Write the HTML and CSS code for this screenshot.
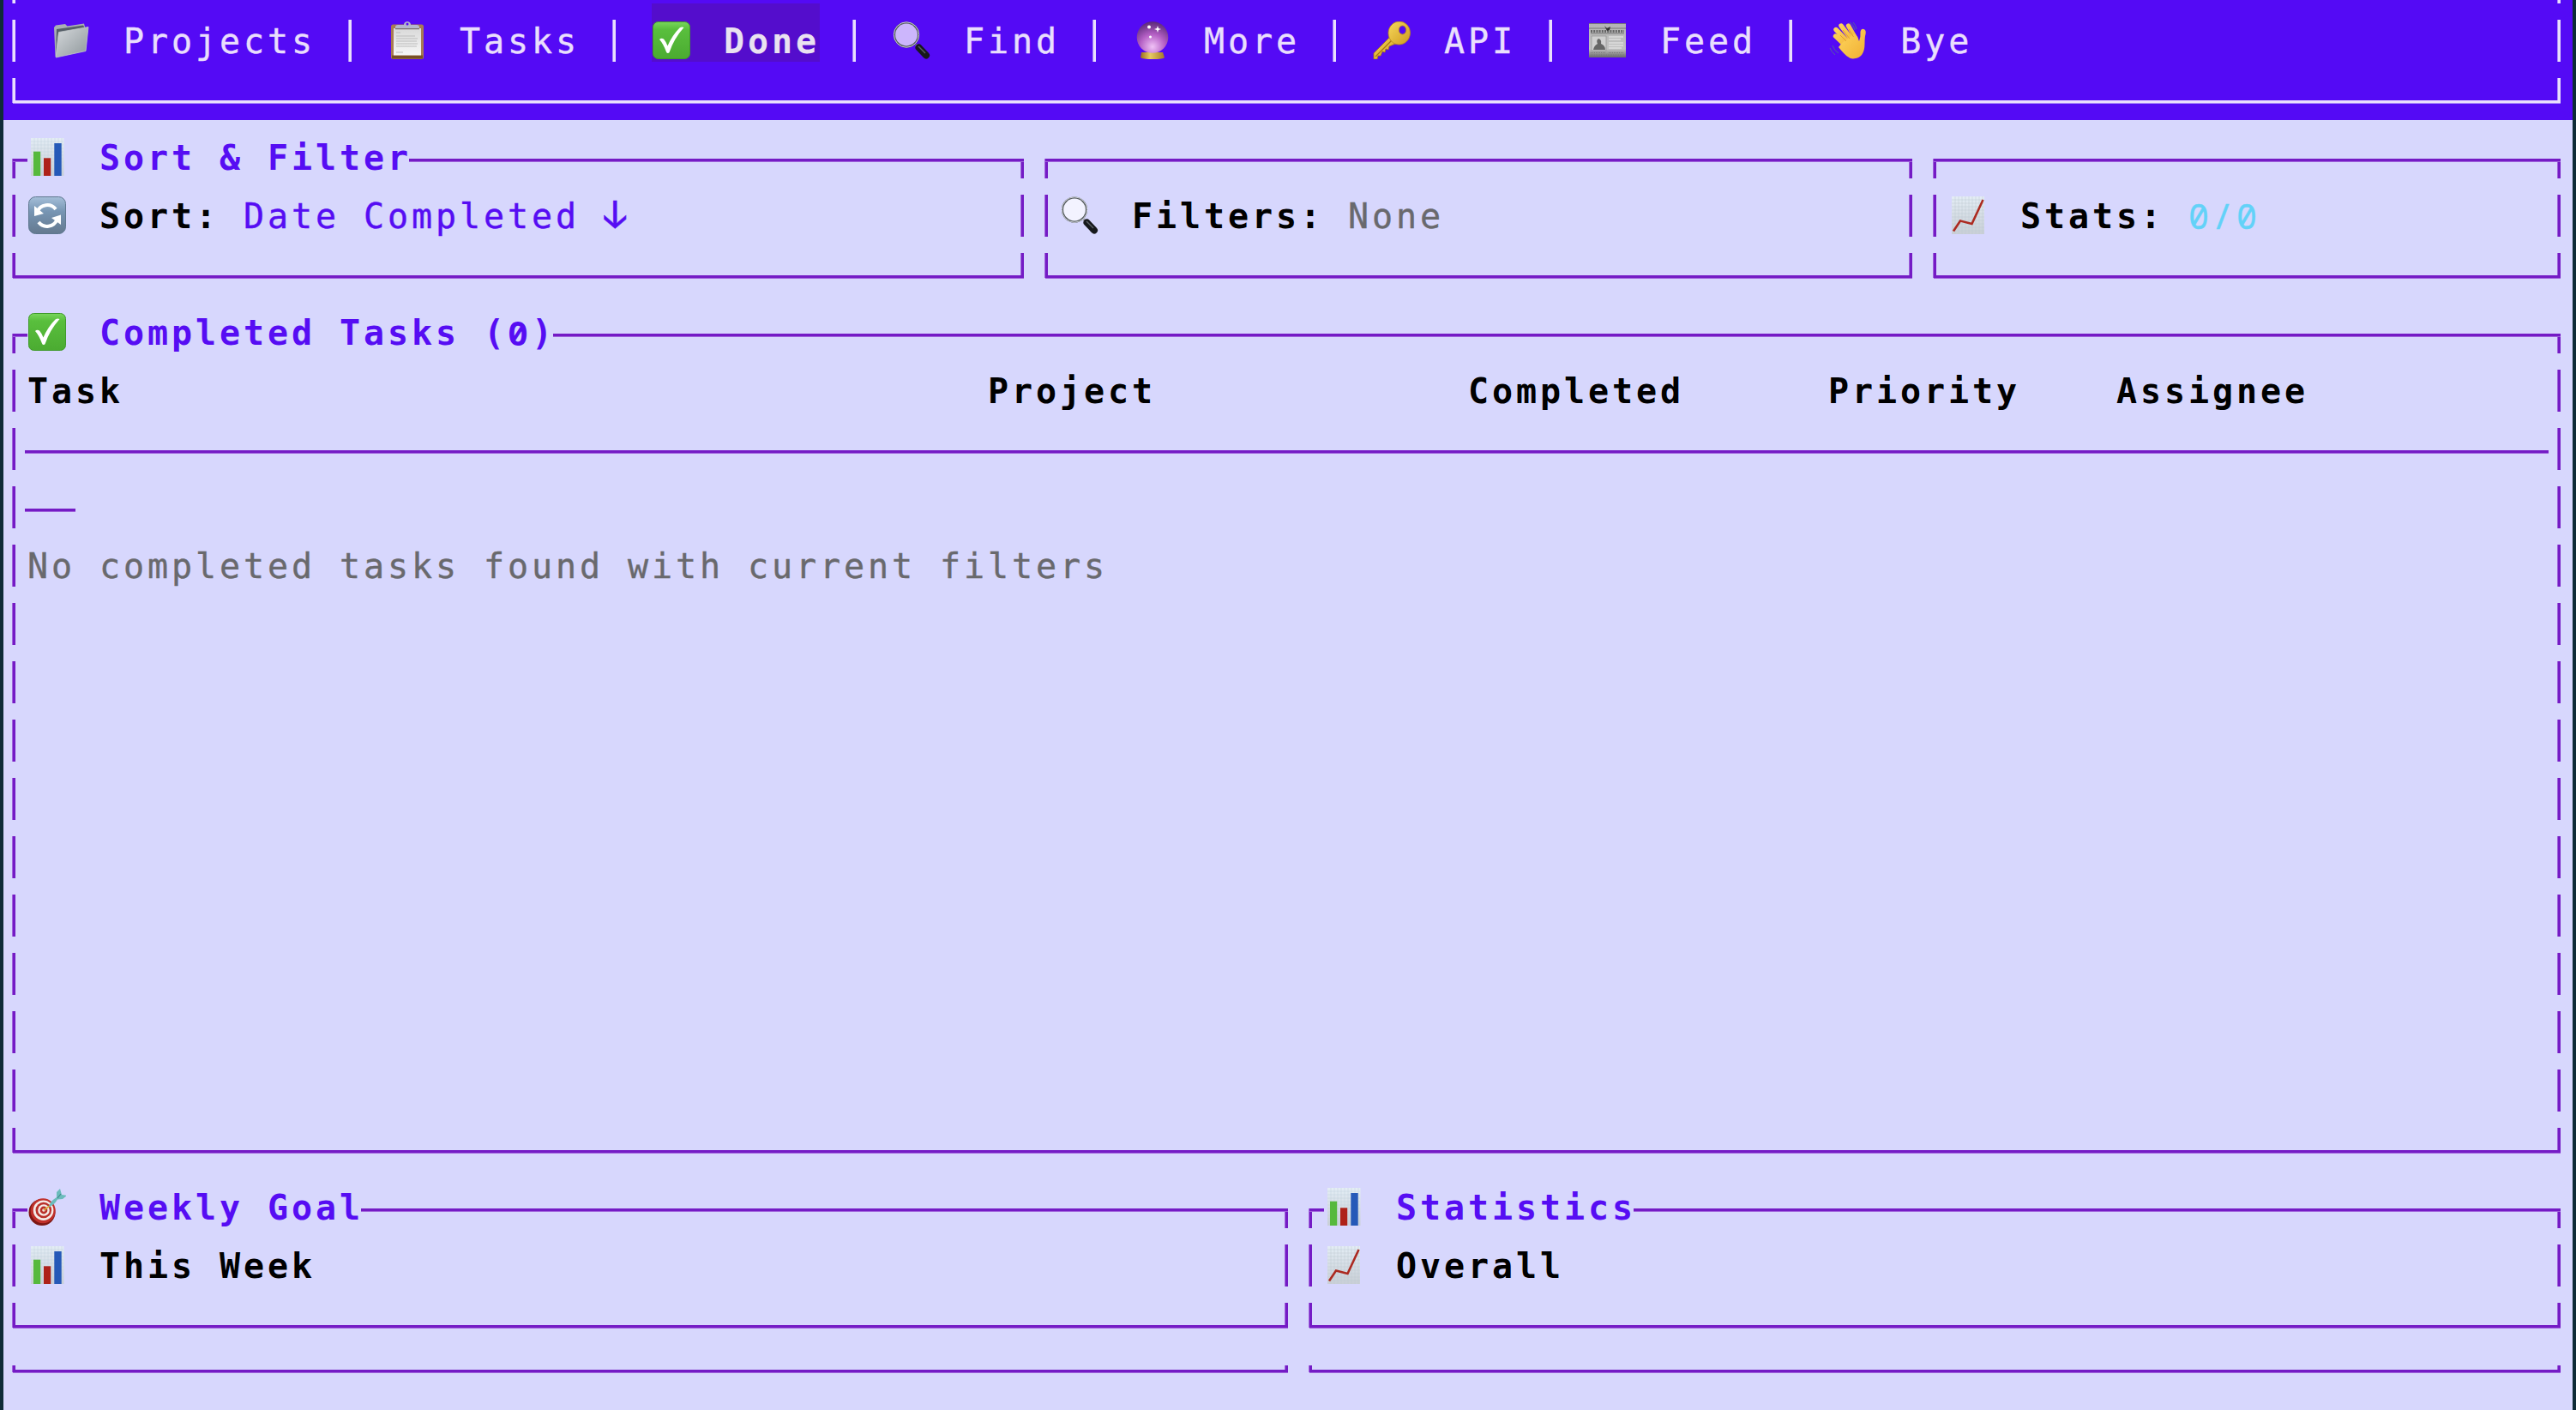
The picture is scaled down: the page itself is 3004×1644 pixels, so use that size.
FILE: index.html
```html
<!DOCTYPE html>
<html lang="en">
<head>
<meta charset="utf-8">
<title>Completed Tasks</title>
<link rel="stylesheet" href="styles.css">
</head>
<body>
<svg class="defs" aria-hidden="true">
  <defs>
    <linearGradient id="gSilver" x1="0" y1="0" x2="1" y2="1"><stop offset="0" stop-color="#d5d9dc"/><stop offset="1" stop-color="#8f979b"/></linearGradient>
    <linearGradient id="gPaper" x1="0" y1="0" x2="0" y2="1"><stop offset="0" stop-color="#e4edf5"/><stop offset="1" stop-color="#c9cfd6"/></linearGradient>
    <linearGradient id="gGreen" x1="0" y1="0" x2="0" y2="1"><stop offset="0" stop-color="#79d65c"/><stop offset=".2" stop-color="#59bf3d"/><stop offset="1" stop-color="#4bab31"/></linearGradient>
    <linearGradient id="gSlate" x1="0" y1="0" x2="0" y2="1"><stop offset="0" stop-color="#a5bfd9"/><stop offset=".4" stop-color="#7795b3"/><stop offset="1" stop-color="#64798f"/></linearGradient>
    <radialGradient id="gBall" cx=".5" cy=".8" r=".8"><stop offset="0" stop-color="#f0c2f6"/><stop offset=".5" stop-color="#b45fc4"/><stop offset="1" stop-color="#5a2a78"/></radialGradient>
    <linearGradient id="gGold" x1="0" y1="0" x2="1" y2="0"><stop offset="0" stop-color="#9c6d1c"/><stop offset=".4" stop-color="#e8cb62"/><stop offset="1" stop-color="#a57a26"/></linearGradient>
    <linearGradient id="gKey" x1="0" y1="0" x2="1" y2="1"><stop offset="0" stop-color="#f7d95c"/><stop offset="1" stop-color="#cf9a1e"/></linearGradient>
    <linearGradient id="gNews" x1="0" y1="0" x2="0" y2="1"><stop offset="0" stop-color="#b4b4b4"/><stop offset=".75" stop-color="#c2c2c2"/><stop offset="1" stop-color="#6a6a6a"/></linearGradient>
    <linearGradient id="gHand" x1="0" y1="0" x2="1" y2="1"><stop offset="0" stop-color="#ffd75e"/><stop offset="1" stop-color="#f0ae33"/></linearGradient>
    <linearGradient id="gSheet" x1="0" y1="0" x2="0" y2="1"><stop offset="0" stop-color="#d9d9d9"/><stop offset="1" stop-color="#f7f7f7"/></linearGradient>
  </defs>
  <symbol id="folder" viewBox="0 0 44 44">
    <path d="M2 7 4 4.500 15 3 17.500 5.500 37 2.500 38.500 8 8 40 3.500 41z" fill="#aab0b4"/>
    <path d="M5 9 36 4.500 38 8 7 14 4 38z" fill="#565f68"/>
    <path d="M7.500 12.500 42 6.500 39 34.500 4.200 42z" fill="url(#gSilver)" stroke="#c4c9cc" stroke-width=".8"/>
  </symbol>
  <symbol id="clipboard" viewBox="0 0 44 44">
    <rect x="3" y="3.500" width="38" height="40.500" rx="2.500" fill="#a87b52"/>
    <rect x="4" y="39.500" width="36" height="4" fill="#775025"/>
    <rect x="6" y="8" width="32" height="31.500" fill="url(#gSheet)"/>
    <path d="M9 13h5M9 17h22M9 20h25M9 23h24M9 26h25M9 29h24M9 36h8" stroke="#bcbcbc" stroke-width="1.200"/>
    <path d="M8 8.500V6.500Q8 4 11 4h7q0-3.500 4-4 4 .5 4 4h7q3 0 3 2.500v2z" fill="#b5b8cc"/>
    <path d="M8 8.700h28" stroke="#6c5a58" stroke-width="1"/>
    <circle cx="22" cy="3" r="1.500" fill="#540af5"/>
  </symbol>
  <symbol id="check" viewBox="0 0 44 44">
    <rect x=".5" y=".5" width="43" height="43" rx="6" fill="url(#gGreen)" stroke="#409a2c"/>
    <path d="M8 21q2-2 5-.5 3 3.500 4.500 8Q23 16 31.500 7.500q2.500-1.500 5-.5Q25 20 20 35q-.5 2-2 2-1.500 0-2-1.500Q12.500 26 8 21z" fill="#fff"/>
  </symbol>
  <symbol id="search" viewBox="0 0 44 44">
    <path d="m27 27 4 4" stroke="#777" stroke-width="3"/>
    <path d="m30.500 30.500 8.500 9" stroke="#17191c" stroke-width="8" stroke-linecap="round"/>
    <path d="m30 29 8 8" stroke="#5b6065" stroke-width="1.500"/>
    <circle cx="16" cy="15.500" r="14" fill="#fff" fill-opacity=".7" stroke="#555b5f" stroke-width="2.200"/>
    <circle cx="16" cy="15.500" r="14.700" fill="none" stroke="#c8ccd0" stroke-width="1"/>
  </symbol>
  <symbol id="ball" viewBox="0 0 44 44">
    <path d="M10 36h25l2 6q-1 2-14 2-12 0-14-2z" fill="url(#gGold)"/>
    <circle cx="23" cy="18.500" r="18.300" fill="url(#gBall)"/>
    <path d="m29 5 1 3 3 1-3 1-1 3-1-3-3-1 3-1z" fill="#fff"/>
    <circle cx="19" cy="6.500" r="2" fill="#fff"/><circle cx="20.500" cy="18" r="1.500" fill="#fff"/>
  </symbol>
  <symbol id="key" viewBox="0 0 44 44">
    <path d="M21 17 1 37v7h4l1-4h3l2-5 3 1 1-4 3 1 1-4 10-4z" fill="url(#gKey)" stroke="#a97810" stroke-width=".8"/>
    <path d="M24 20 3 41" stroke="#a97810" stroke-width="1.200"/>
    <path fill-rule="evenodd" d="M31 0a13 13 0 0 1 12.500 13c0 8-6 14-13 14S18 21 18 13.500 24 0 31 0zm3.500 5a4.200 5 0 1 0 0 10 4.200 5 0 1 0 0-10z" fill="url(#gKey)" stroke="#b5861b" stroke-width=".8"/>
  </symbol>
  <symbol id="news" viewBox="0 0 44 44">
    <rect y="2" width="43" height="40" fill="url(#gNews)"/>
    <path d="M0 2.500h43M0 8h43M2 14h39" stroke="#777" stroke-width="1"/>
    <path d="M2 11.500h39" stroke="#666" stroke-width="3" stroke-dasharray="2 1.200"/>
    <path d="m18 5 3 3 4-2-1 4-3 1z" fill="#333"/>
    <rect x="3" y="17" width="17" height="17" fill="#d0d0d0" stroke="#888" stroke-width=".6"/>
    <path d="M5 33q1-5 5-7-2-4 1-6 4 1 3 6 5 2 5 7z" fill="#666"/>
    <path d="M23 18h17M23 21h14M23 25h17M23 28h17M23 31h15" stroke="#dedede" stroke-width="1.500"/>
    <path d="M2 36.500h18M23 36.500h18M2 39h39" stroke="#777" stroke-width="1" stroke-dasharray="1 1"/>
  </symbol>
  <symbol id="wave" viewBox="0 0 44 44">
    <g fill="none" stroke="url(#gHand)" stroke-width="5.400" stroke-linecap="round"><path d="M20 29 7.500 17M23 25 8 9.500M27 22 14 5M31 20 22.500 5"/></g>
    <path d="M15 25 30 14q4 4 5 9 2-5 1.500-11 1-4 4-3 3 1 2 6-1 3-1 11 0 17-13.500 17.500Q22 44 11 30z" fill="url(#gHand)"/>
    <path d="m20 23-7-7M24 20l-8-10M28.500 18 23 9" stroke="#d9942a" stroke-width=".8"/>
    <path d="M24 1q5 3 6 9M28 1q3 3 4 8M4 28q2 6 7 9M1 31q2 5 6 8" stroke="#5560a0" stroke-width="1" fill="none"/>
  </symbol>
  <symbol id="bars" viewBox="0 0 44 44">
    <rect x="3" width="38.500" height="44" fill="url(#gPaper)"/>
    <path d="M3 4h38M3 8h38M3 12h38M3 16h38M3 20h38M3 24h38M3 28h38M3 32h38M3 36h38M3 40h38M7 0v44M11 0v44M15 0v44M19 0v44M23 0v44M27 0v44M31 0v44M35 0v44M39 0v44" stroke="#c3d0dc" stroke-width=".5"/>
    <rect x="6" y="15.700" width="8.200" height="28.300" fill="#56b93c"/>
    <rect x="18" y="23.300" width="8.200" height="20.700" fill="#ae2219"/>
    <rect x="30.300" y="6" width="8.400" height="38" fill="#2559b8"/>
  </symbol>
  <symbol id="trend" viewBox="0 0 44 44">
    <rect x="3" width="38" height="44" fill="url(#gPaper)"/>
    <path d="M3 4h38M3 8h38M3 12h38M3 16h38M3 20h38M3 24h38M3 28h38M3 32h38M3 36h38M3 40h38M7 0v44M11 0v44M15 0v44M19 0v44M23 0v44M27 0v44M31 0v44M35 0v44M39 0v44" stroke="#bfc9d2" stroke-width=".5"/>
    <path d="M5 40.500 13 28.500 26.500 32 39.500 4" fill="none" stroke="#ac2a20" stroke-width="2.600"/>
  </symbol>
  <symbol id="cycle" viewBox="0 0 44 44">
    <rect x=".5" y=".5" width="43" height="43" rx="8" fill="url(#gSlate)" stroke="#5f7890"/>
    <path d="M10.500 18A12.500 12.500 0 0 1 32 15M33.500 27A12.500 12.500 0 0 1 12 30" fill="none" stroke="#fff" stroke-width="4"/>
    <path d="M7 11v12l11-3zM38 33V21.500L27 25z" fill="#fff"/>
  </symbol>
  <symbol id="target" viewBox="0 0 44 44">
    <ellipse cx="16" cy="28.500" rx="15.500" ry="15.500" fill="#7d1713"/>
    <circle cx="17.200" cy="26.700" r="14.500" fill="#c0302a"/>
    <circle cx="17.600" cy="26.200" r="11.800" fill="#f4ece8"/>
    <circle cx="17.800" cy="26" r="9.300" fill="#b93029"/>
    <circle cx="18" cy="26" r="6.800" fill="#f4ece8"/>
    <circle cx="18" cy="26" r="4.400" fill="#b93029"/>
    <circle cx="18" cy="26" r="1.800" fill="#f4ece8"/>
    <path d="m18 26 7-5" stroke="#d9a93c" stroke-width="1.800"/>
    <path d="M24 22q1-6 9-11l0-6 4-4 2 7 6 1-5 4-6 .5q-4 7-10 8.500z" fill="#6bbcbb"/>
    <path d="M34 12 38 7" stroke="#41868a" stroke-width="1.200"/>
  </symbol>
</svg>

<div class="screen">
  <header class="menu">
    <div class="row stub"></div>
    <nav class="row line">
      <a class="item"><svg class="emoji"><use href="#folder"/></svg>Projects</a><i class="sep"></i>
      <a class="item"><svg class="emoji"><use href="#clipboard"/></svg>Tasks</a><i class="sep"></i>
      <a class="item active"><svg class="emoji"><use href="#check"/></svg>Done</a><i class="sep"></i>
      <a class="item"><svg class="emoji"><use href="#search"/></svg>Find</a><i class="sep"></i>
      <a class="item"><svg class="emoji"><use href="#ball"/></svg>More</a><i class="sep"></i>
      <a class="item"><svg class="emoji"><use href="#key"/></svg>API</a><i class="sep"></i>
      <a class="item"><svg class="emoji"><use href="#news"/></svg>Feed</a><i class="sep"></i>
      <a class="item"><svg class="emoji"><use href="#wave"/></svg>Bye</a>
    </nav>
    <div class="bottom"></div>
  </header>

  <main>
    <div class="split controls">
      <section class="panel">
        <div class="top"><h2><svg class="emoji"><use href="#bars"/></svg>Sort &amp; Filter</h2></div>
        <div class="row line"><svg class="emoji"><use href="#cycle"/></svg><b>Sort:</b><span class="accent">Date Completed <span class="arrow">↓</span></span></div>
        <div class="bottom"></div>
      </section>
      <section class="panel">
        <div class="top"></div>
        <div class="row line"><svg class="emoji"><use href="#search"/></svg><b>Filters:</b><span class="muted">None</span></div>
        <div class="bottom"></div>
      </section>
      <section class="panel">
        <div class="top"></div>
        <div class="row line"><svg class="emoji"><use href="#trend"/></svg><b>Stats:</b><span class="count">0/0</span></div>
        <div class="bottom"></div>
      </section>
    </div>

    <section class="panel">
      <div class="top"><h2><svg class="emoji"><use href="#check"/></svg>Completed Tasks (<span class="zero">0</span>)</h2></div>
      <div class="row line columns"><b>Task</b><b>Project</b><b>Completed</b><b>Priority</b><b>Assignee</b></div>
      <div class="row line"><hr class="rule"></div>
      <div class="row line"><hr class="rule short"></div>
      <div class="row line muted">No completed tasks found with current filters</div>
      <div class="row empty"></div>
      <div class="bottom"></div>
    </section>

    <div class="split summary">
      <section class="panel">
        <div class="top"><h2><svg class="emoji"><use href="#target"/></svg>Weekly Goal</h2></div>
        <div class="row line"><svg class="emoji"><use href="#bars"/></svg><b>This Week</b></div>
        <div class="bottom"></div>
        <div class="bottom clipped"></div>
      </section>
      <section class="panel">
        <div class="top"><h2><svg class="emoji"><use href="#bars"/></svg>Statistics</h2></div>
        <div class="row line"><svg class="emoji"><use href="#trend"/></svg><b>Overall</b></div>
        <div class="bottom"></div>
        <div class="bottom clipped"></div>
      </section>
    </div>
  </main>
</div>
</body>
</html>
```
FILE: styles.css
```css
:root {
  --cell: 28px;
  --line: 68px;
  --bg: #d7d7fd;
  --accent: #560df3;
  --border: #741bc5;
  --border-soft: #a063dc;
}

* { box-sizing: border-box; }

body {
  margin: 0;
  background: #0e2b37;
  color: #000;
  font: 40px/88px "DejaVu Sans Mono", "Liberation Mono", monospace;
  letter-spacing: 3.92px;
}

.defs { position: absolute; width: 0; height: 0; }

.screen {
  width: 2996px;
  height: 1644px;
  margin: 0 auto;
  overflow: hidden;
  background: var(--bg);
}

/* Menu bar */
.menu {
  --border: #e9defd;
  --border-soft: #a98afb;
  background: #540af5;
  color: #e9defd;
}
.row.stub { height: 4px; background-position: left 10px top 0, right 14px top 0; }
.menu .line { padding-left: 56px; }
.item { display: flex; height: var(--line); -webkit-text-stroke: .4px; }
.item.active { background: #540dcc; color: #e9e2f0; font-weight: bold; -webkit-text-stroke: 0; }
.sep {
  width: 4px;
  height: 49px;
  margin: 19px 42px 0 38px;
  background: linear-gradient(90deg, var(--border-soft) 1px, var(--border) 1px);
}

/* Box drawing: each row paints its own left and right stroke */
.row, .top, .bottom {
  --stroke: linear-gradient(90deg, var(--border-soft) 1px, var(--border) 1px);
  --flat: linear-gradient(var(--border) 3px, var(--border-soft) 3px);
  height: var(--line);
  background-repeat: no-repeat;
}
.row {
  background-image: var(--stroke), var(--stroke);
  background-size: 4px 49px;
  background-position: left 10px top 19px, right 14px top 19px;
}
.line { display: flex; padding: 0 var(--cell); white-space: pre; }
.top {
  display: flex;
  background-image: var(--flat), var(--stroke), var(--stroke);
  background-size: calc(100% - 25px) 4px, 4px 23px, 4px 23px;
  background-position: left 11px top 45px, left 10px top 45px, right 14px top 45px;
}
.bottom {
  background-image: var(--flat), var(--stroke), var(--stroke);
  background-size: calc(100% - 25px) 4px, 4px 29px, 4px 29px;
  background-position: left 11px top 45px, left 10px top 19px, right 14px top 19px;
}
.bottom.clipped {
  height: 76px;
  background-size: calc(100% - 25px) 4px, 4px 8px, 4px 8px;
  background-position: left 11px top 29px, left 10px top 24px, right 14px top 24px;
}

h2 {
  display: inline-flex;
  height: var(--line);
  margin: 0 0 0 var(--cell);
  background: var(--bg);
  clip-path: inset(0 3px 0 0);
  color: var(--accent);
  font-size: inherit;
  white-space: pre;
}

.emoji { flex: none; width: 44px; height: 44px; margin: 21px 39px 0 1px; }

/* Panels */
.split { display: grid; }
.controls { grid-template-columns: 43fr 37fr 27fr; }
.summary { grid-template-columns: 54fr 53fr; }
b + span { margin-left: var(--cell); }
.accent, .muted, .count { -webkit-text-stroke: .4px; }
.accent { color: var(--accent); }
.muted { color: #69696d; }
.count { color: #62d2f8; }
.zero, .count { font-family: "Noto Sans Mono", "DejaVu Sans Mono", monospace; letter-spacing: 4px; }
.arrow { font-family: "JetBrains Mono", "DejaVu Sans Mono", monospace; font-size: 44px; line-height: 0; }

.columns {
  display: grid;
  grid-template-columns: repeat(107, var(--cell));
  padding: 0;
}
.columns b { grid-row: 1; }
.columns b:nth-child(1) { grid-column: 2 / span 40; }
.columns b:nth-child(2) { grid-column: 42 / span 20; }
.columns b:nth-child(3) { grid-column: 62 / span 15; }
.columns b:nth-child(4) { grid-column: 77 / span 12; }
.columns b:nth-child(5) { grid-column: 89 / span 12; }

.rule {
  width: calc(100% + 3px);
  height: 4px;
  margin: 45px 0 0 -3px;
  border: 0;
  background: linear-gradient(var(--border) 3px, var(--border-soft) 3px);
}
.rule.short { width: 59px; }

/* Nine blank rows painted as one block */
.row.empty {
  height: calc(var(--line) * 9);
  background-image:
    repeating-linear-gradient(var(--bg) 0 19px, transparent 19px 68px),
    linear-gradient(90deg, transparent 10px, var(--border-soft) 10px 11px, var(--border) 11px 14px, transparent 14px calc(100% - 18px), var(--border-soft) calc(100% - 18px) calc(100% - 17px), var(--border) calc(100% - 17px) calc(100% - 14px), transparent calc(100% - 14px));
  background-size: 100% 100%;
  background-position: 0 0;
}
```
